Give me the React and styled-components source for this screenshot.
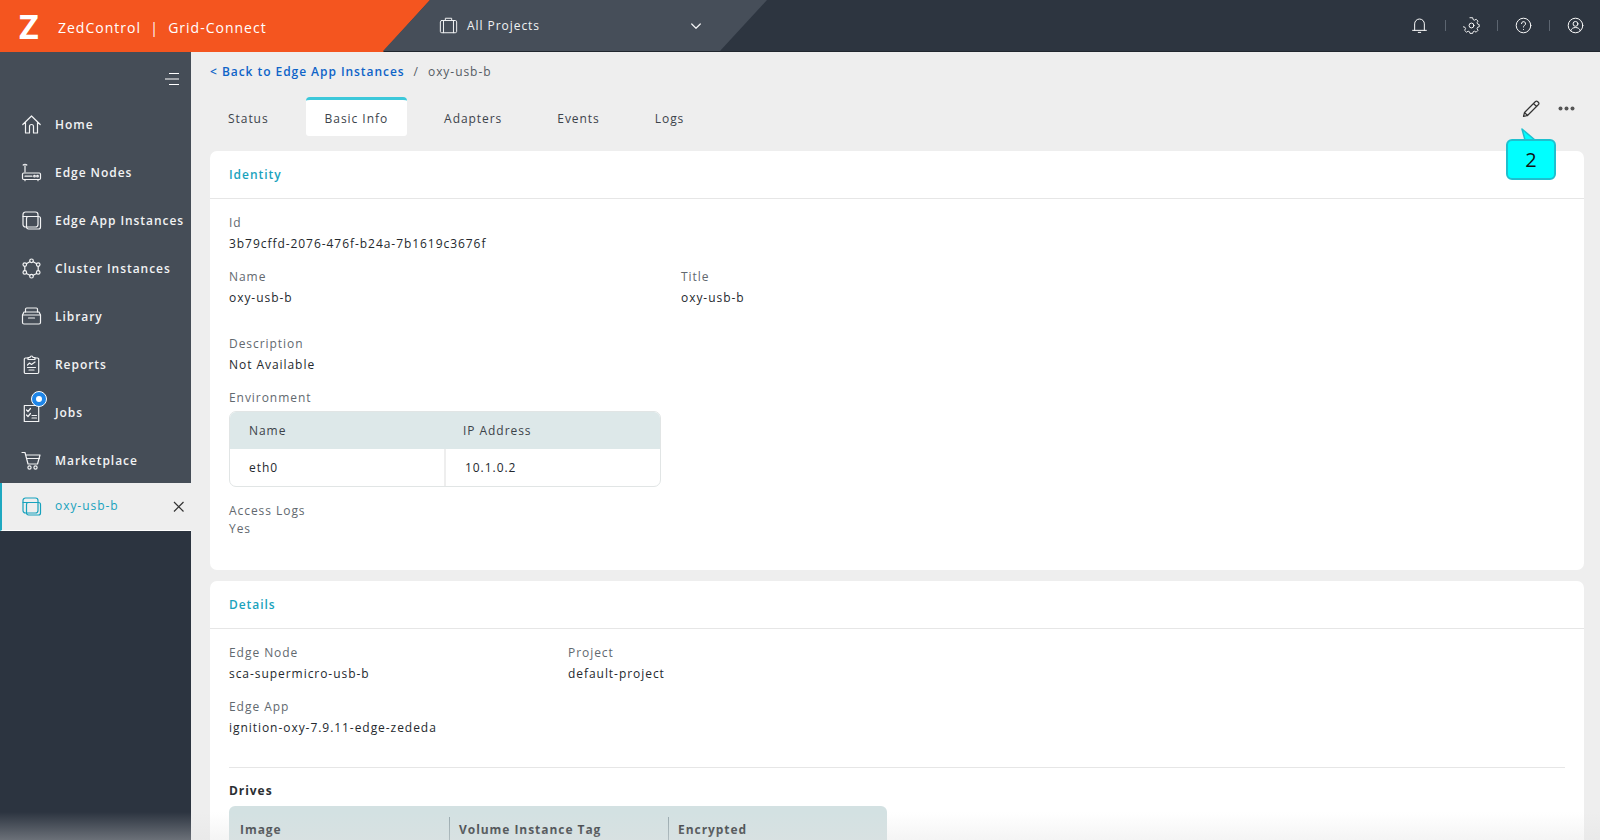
import React from "react";
import styled, { createGlobalStyle } from "styled-components";

const Global = createGlobalStyle`
  html, body { margin: 0; padding: 0; height: 100%; overflow: hidden; }
  body { font-family: "Open Sans", "Liberation Sans", sans-serif; background: #eeeeee; }
  * { box-sizing: border-box; }
`;

const Page = styled.div`
  position: relative;
  width: 1600px;
  height: 840px;
  overflow: hidden;
  display: flex;
  flex-direction: column;
`;
const Header = styled.header`
  height: 52px;
  flex: none;
  display: flex;
  background: #2d3540;
  border-bottom: 1px solid #20262e;
`;
const Brand = styled.div`
  width: 430px;
  height: 52px;
  flex: none;
  display: flex;
  align-items: center;
  padding-left: 19px;
  gap: 17px;
  color: #fff;
  background: #f4551f;
  clip-path: polygon(0 0, 100% 0, 383px 100%, 0 100%);
`;
const Logo = styled.span`
  font: 700 34px/1 "Open Sans", sans-serif;
  width: 22px;
  margin-top: -1px;
`;
const BrandText = styled.span`
  font-size: 14px;
  letter-spacing: 1px;
  margin-top: 2px;
  white-space: nowrap;
`;
const ProjectBar = styled.div`
  width: 384px;
  height: 51px;
  flex: none;
  margin-left: -47px;
  background: #464e59;
  clip-path: polygon(47px 0, 100% 0, 337px 100%, 0 100%);
  display: flex;
  align-items: center;
  padding-left: 56px;
  color: #f1f2f3;
`;
const ProjectName = styled.span`
  font-size: 12px;
  letter-spacing: 0.95px;
  margin-left: 9px;
  width: 223px;
`;
const HeaderIcons = styled.div`
  margin-left: auto;
  display: flex;
  align-items: center;
  padding-right: 16px;
  color: #fff;
`;
const HeaderDivider = styled.span`
  width: 1px;
  height: 11px;
  background: #5c6570;
  margin: 0 17px;
`;
const Body = styled.div`
  flex: 1;
  display: flex;
  min-height: 0;
`;
const Sidebar = styled.aside`
  width: 191px;
  flex: none;
  background: #2c3440;
  display: flex;
  flex-direction: column;
`;
const NavPanel = styled.nav`
  background: #454d57;
  padding-top: 20px;
  height: 431px;
`;
const Collapse = styled.div`
  height: 14px;
  display: flex;
  justify-content: flex-end;
  padding-right: 11px;
  margin-bottom: 14px;
  color: #fff;
`;
const NavItem = styled.div`
  position: relative;
  height: 48px;
  display: flex;
  align-items: center;
  padding-left: 21px;
  gap: 13px;
  color: #f2f3f4;
  font-size: 12px;
  font-weight: 600;
  letter-spacing: 0.95px;
  white-space: nowrap;
`;
const IconSlot = styled.span`
  width: 21px;
  height: 21px;
  flex: none;
  display: flex;
`;
const Badge = styled.span`
  position: absolute;
  left: 31px;
  top: 3px;
  width: 16px;
  height: 16px;
  border-radius: 50%;
  background: #1f86e8;
  border: 1px solid #fff;
  &::after {
    content: "";
    position: absolute;
    left: 4px;
    top: 4px;
    width: 6px;
    height: 6px;
    border-radius: 50%;
    background: #fff;
  }
`;
const ActiveItem = styled.div`
  height: 48px;
  display: flex;
  align-items: center;
  background: #eeeeee;
  border-left: 2px solid #1ea8c0;
  border-bottom: 1px solid #fff;
  padding: 0 6px 0 19px;
  gap: 13px;
  color: #17a2bd;
  font-size: 12px;
  letter-spacing: 0.95px;
  span:nth-of-type(2) { flex: 1; margin-top: -3px; }
`;
const Main = styled.main`
  flex: 1;
  min-width: 0;
  padding: 12px 16px 0 19px;
  display: flex;
  flex-direction: column;
`;
const Crumbs = styled.div`
  font-size: 12px;
  letter-spacing: 0.95px;
  line-height: 16px;
  color: #555c64;
  display: flex;
  gap: 9px;
  a { color: #0e64c8; font-weight: 600; }
`;
const TabRow = styled.div`
  display: flex;
  align-items: flex-end;
  height: 39px;
  margin-top: 17px;
  padding-left: 0;
`;
const Tab = styled.div`
  height: 39px;
  padding: ${(p) => (p.$active ? "0 19px" : "0 18px")};
  margin-right: ${(p) => (p.$active ? "19px" : "19px")};
  display: flex;
  align-items: center;
  font-size: 12px;
  letter-spacing: 0.95px;
  color: #3c434b;
  background: ${(p) => (p.$active ? "#fff" : "transparent")};
  border-top: 3px solid ${(p) => (p.$active ? "#3cc8da" : "transparent")};
  border-radius: 4px 4px 3px 3px;
`;
const TabActions = styled.div`
  margin-left: auto;
  align-self: flex-start;
  display: flex;
  align-items: center;
  gap: 16px;
  margin-top: 1px;
  padding-right: 9px;
  color: #333;
`;
const Card = styled.section`
  background: #fff;
  border-radius: 7px;
  margin-top: ${(p) => p.$gap}px;
  flex: none;
  height: ${(p) => p.$h}px;
`;
const CardTitle = styled.div`
  height: 48px;
  padding: 0 19px;
  display: flex;
  align-items: center;
  font-size: 12px;
  font-weight: 600;
  letter-spacing: 0.95px;
  color: #1aa3bd;
  border-bottom: 1px solid #e6e6e6;
`;
const CardBody = styled.div`
  padding: 15px 19px;
`;
const Row = styled.div`
  display: flex;
  margin-bottom: ${(p) => p.$mb || 0}px;
`;
const Field = styled.div`
  width: ${(p) => p.$w || 452}px;
  flex: none;
`;
const Label = styled.div`
  font-size: 12px;
  letter-spacing: 0.95px;
  line-height: 18px;
  color: #62696f;
`;
const Value = styled.div`
  font-size: 12px;
  letter-spacing: 0.95px;
  line-height: 18px;
  margin-top: ${(p) => p.$mt ?? 3}px;
  color: ${(p) => p.$c || "#24292e"};
`;
const EnvTable = styled.div`
  width: 432px;
  margin-top: 4px;
  border: 1px solid #e1e5e5;
  border-radius: 7px;
  overflow: hidden;
  font-size: 12px;
  letter-spacing: 0.95px;
  display: grid;
  grid-template-columns: 214px 1fr;
`;
const EnvHead = styled.div`
  height: 37px;
  background: #dde8e9;
  display: flex;
  align-items: center;
  padding-left: 19px;
  color: #3c4349;
`;
const EnvCell = styled.div`
  height: 37px;
  display: flex;
  align-items: center;
  padding-left: 19px;
  color: #24292e;
  & + & { border-left: 2px solid #eeeeee; }
`;
const Divider = styled.div`
  height: 1px;
  background: #e6e6e6;
  margin-top: 30px;
`;
const DrivesTitle = styled.div`
  font-size: 12px;
  font-weight: 700;
  letter-spacing: 0.95px;
  line-height: 16px;
  margin-top: 15px;
  color: #2b2f33;
`;
const DriveTable = styled.div`
  width: 658px;
  height: 50px;
  margin-top: 7px;
  background: #d3e1e2;
  border-radius: 6px;
  padding: 11px 0 0 11px;
  display: grid;
  grid-template-columns: 219px 219px 1fr;
  font-size: 12px;
  font-weight: 700;
  letter-spacing: 0.95px;
  color: #2f3438;
`;
const DriveHead = styled.div`
  height: 24px;
  display: flex;
  align-items: center;
  position: relative;
  & + &::before {
    content: "";
    position: absolute;
    left: -10px;
    top: 0;
    width: 1px;
    height: 24px;
    background: #97a8ad;
  }
`;
const Fade = styled.div`
  position: absolute;
  left: 0;
  right: 0;
  bottom: 0;
  height: 28px;
  background: linear-gradient(to bottom, rgba(235, 235, 235, 0), rgba(225, 225, 225, 0.35));
  pointer-events: none;
`;
const Callout = styled.div`
  position: absolute;
  left: 1506px;
  top: 139px;
  width: 50px;
  height: 41px;
  background: #00ffff;
  border: 2px solid #1ec0cf;
  border-radius: 6px;
  display: flex;
  align-items: center;
  justify-content: center;
  font: 400 20px/1 "Open Sans", sans-serif;
  color: #111;
`;
const CalloutTail = styled.svg`
  position: absolute;
  left: 1520px;
  top: 128px;
`;

const Ic = ({ children, size = 21, w, h, sw = 1.2 }) => (
  <svg width={w || size} height={h || size} viewBox="0 0 21 21" fill="none" stroke="currentColor" strokeWidth={sw} strokeLinecap="round" strokeLinejoin="round">
    {children}
  </svg>
);

const icons = {
  home: <Ic><path d="M1.8 10.5 10.5 2l8.7 8.5M4.5 8.5V19h4v-6.5a2 2 0 0 1 4 0V19h4V8.5" /></Ic>,
  node: <Ic><path d="M4 10V3.5M2.2 3A2.5 2.5 0 0 1 5.8 3" /><rect x="1.5" y="11" width="18" height="6.5" rx="1.2" /><path d="M4 14.2h7" /><circle cx="13.5" cy="14.2" r=".8" /><circle cx="16.5" cy="14.2" r=".8" /><path d="M4 17.5v1.2M17 17.5v1.2" /></Ic>,
  app: <Ic><rect x="2" y="2" width="15" height="15" rx="2.5" /><path d="M2 6.5h15" /><rect x="5.5" y="6.5" width="14" height="12.5" rx="2" /></Ic>,
  cluster: <Ic><circle cx="10.5" cy="2.8" r="1.8" /><circle cx="17.2" cy="6.6" r="1.8" /><circle cx="17.2" cy="14.4" r="1.8" /><circle cx="10.5" cy="18.2" r="1.8" /><circle cx="3.8" cy="14.4" r="1.8" /><circle cx="3.8" cy="6.6" r="1.8" /><path d="M12.2 3.7l3.4 2M17.2 8.4v4.2M15.6 15.4l-3.4 1.9M8.8 17.3l-3.4-1.9M3.8 12.6V8.4M5.4 5.7l3.4-2" /></Ic>,
  library: <Ic><path d="M4.5 6V3.2A1.2 1.2 0 0 1 5.7 2h9.6a1.2 1.2 0 0 1 1.2 1.2V6" /><path d="M3 6h15l1.5 3v7.5a1.5 1.5 0 0 1-1.5 1.5H3a1.5 1.5 0 0 1-1.5-1.5V9z" /><path d="M1.5 9h18M7.5 12h6" /></Ic>,
  reports: <Ic><path d="M7 4H4.5A1.2 1.2 0 0 0 3.3 5.2v13.1a1.2 1.2 0 0 0 1.2 1.2h12a1.2 1.2 0 0 0 1.2-1.2V5.2A1.2 1.2 0 0 0 16.500 4H14" /><path d="M7 5.500V3.500h2a1.500 1.500 0 0 1 3 0h2v2z" /><path d="M6.500 11l2-2 2 1.500 3.500-2.500M6.500 13.500h8M8 16h5" /></Ic>,
  jobs: <Ic><path d="M3.300 3.500h14.400v16H3.300z" /><path d="M5.500 8l1.500 1.500 2.500-3M5.500 13l1.500 1.500 2.500-3M11 13.500h4.500M11 16h4.500" /></Ic>,
  cart: <Ic><path d="M1 2.500h3l3 11.500h9.500l2.500-9H5" /><path d="M6 8.500h12.500" /><circle cx="8.500" cy="17.500" r="1.600" /><circle cx="14.500" cy="17.500" r="1.600" /></Ic>,
};

const navItems = [
  ["home", "Home"],
  ["node", "Edge Nodes"],
  ["app", "Edge App Instances"],
  ["cluster", "Cluster Instances"],
  ["library", "Library"],
  ["reports", "Reports"],
  ["jobs", "Jobs"],
  ["cart", "Marketplace"],
];

export default function App() {
  return (
    <Page>
      <Global />
      <Header>
        <Brand>
          <Logo>Z</Logo>
          <BrandText>ZedControl&nbsp; | &nbsp;Grid-Connect</BrandText>
        </Brand>
        <ProjectBar>
          <Ic size={19} sw={1.1}><path d="M7 5V2.500h7V5" /><rect x="1.500" y="5" width="18" height="13.500" rx="1.500" /><path d="M5 5v13.500M16 5v13.500" /></Ic>
          <ProjectName>All Projects</ProjectName>
          <Ic size={12} sw={2.2}><path d="M3 7l7.500 7.500L18 7" /></Ic>
        </ProjectBar>
        <HeaderIcons>
          <Ic size={17}><path d="M4.500 16.500V8.500a6 6 0 0 1 12 0v8M2 16.500h17M9 19h3" /></Ic>
          <HeaderDivider />
          <Ic size={17}><path d="M8.700 1.500h3.600l.6 2.500 1.800.8 2.200-1.300 2.500 2.500-1.300 2.200.8 1.800 2.100.6v3l-2.100.6-.8 1.800 1.300 2.200-2.500 2.500-2.200-1.300-1.800.8-.6 2.100H8.700l-.6-2.100-1.800-.8-2.200 1.300-2.500-2.500 1.300-2.200-.8-1.800-2.100-.6" transform="translate(.5 -.5) scale(.93)" /><circle cx="10.500" cy="10.500" r="3" /></Ic>
          <HeaderDivider />
          <Ic size={17}><circle cx="10.500" cy="10.500" r="9" /><path d="M8 8.200a2.500 2.500 0 1 1 3.700 2.200c-.8.500-1.200 1-1.200 2M10.500 15.500v.1" /></Ic>
          <HeaderDivider />
          <Ic size={17}><circle cx="10.500" cy="10.500" r="9" /><circle cx="10.500" cy="8.500" r="3" /><path d="M4.500 17c1-2.800 3.200-4 6-4s5 1.200 6 4" /></Ic>
        </HeaderIcons>
      </Header>
      <Body>
        <Sidebar>
          <NavPanel>
            <Collapse>
              <svg width="15" height="14" viewBox="0 0 15 14" stroke="currentColor" strokeWidth="1.100"><path d="M4 1.500h10M0 7h14M4 12.500h10" /></svg>
            </Collapse>
            {navItems.map(([k, t]) => (
              <NavItem key={k}>
                <IconSlot>{icons[k]}</IconSlot>
                <span>{t}</span>
                {k === "jobs" && <Badge />}
              </NavItem>
            ))}
          </NavPanel>
          <ActiveItem>
            <IconSlot>{icons.app}</IconSlot>
            <span>oxy-usb-b</span>
            <svg width="13" height="13" viewBox="0 0 13 13" stroke="#333" strokeWidth="1.200"><path d="M2 2l9.500 9.500M11.500 2 2 11.500" /></svg>
          </ActiveItem>
        </Sidebar>
        <Main>
          <Crumbs>
            <a>&lt; Back to Edge App Instances</a>
            <span>/</span>
            <span>oxy-usb-b</span>
          </Crumbs>
          <TabRow>
            <Tab>Status</Tab>
            <Tab $active>Basic Info</Tab>
            <Tab>Adapters</Tab>
            <Tab>Events</Tab>
            <Tab>Logs</Tab>
            <TabActions>
              <Ic size={21}><path d="M3.500 14.500 14.500 3.500a1.500 1.500 0 0 1 2 0l1 1a1.500 1.500 0 0 1 0 2L6.500 17.500l-4 1zM12.500 5.500l3 3M3.500 14.500l3 3" /></Ic>
              <svg width="17" height="5" viewBox="0 0 17 5" fill="#555"><circle cx="2.500" cy="2.500" r="2" /><circle cx="8.500" cy="2.500" r="2" /><circle cx="14.500" cy="2.500" r="2" /></svg>
            </TabActions>
          </TabRow>
          <Card $gap={15} $h={419}>
            <CardTitle>Identity</CardTitle>
            <CardBody>
              <Row $mb={15}>
                <Field>
                  <Label>Id</Label>
                  <Value>3b79cffd-2076-476f-b24a-7b1619c3676f</Value>
                </Field>
              </Row>
              <Row $mb={28}>
                <Field>
                  <Label>Name</Label>
                  <Value>oxy-usb-b</Value>
                </Field>
                <Field>
                  <Label>Title</Label>
                  <Value>oxy-usb-b</Value>
                </Field>
              </Row>
              <Row $mb={15}>
                <Field>
                  <Label>Description</Label>
                  <Value>Not Available</Value>
                </Field>
              </Row>
              <Label>Environment</Label>
              <EnvTable>
                <EnvHead>Name</EnvHead>
                <EnvHead>IP Address</EnvHead>
                <EnvCell>eth0</EnvCell>
                <EnvCell>10.1.0.2</EnvCell>
              </EnvTable>
              <Row>
                <Field>
                  <Label style={{ marginTop: 15 }}>Access Logs</Label>
                  <Value $mt={0} $c="#62696f">Yes</Value>
                </Field>
              </Row>
            </CardBody>
          </Card>
          <Card $gap={11} $h={300}>
            <CardTitle>Details</CardTitle>
            <CardBody>
              <Row $mb={15}>
                <Field $w={339}>
                  <Label>Edge Node</Label>
                  <Value>sca-supermicro-usb-b</Value>
                </Field>
                <Field>
                  <Label>Project</Label>
                  <Value>default-project</Value>
                </Field>
              </Row>
              <Field>
                <Label>Edge App</Label>
                <Value>ignition-oxy-7.9.11-edge-zededa</Value>
              </Field>
              <Divider />
              <DrivesTitle>Drives</DrivesTitle>
              <DriveTable>
                <DriveHead>Image</DriveHead>
                <DriveHead>Volume Instance Tag</DriveHead>
                <DriveHead>Encrypted</DriveHead>
              </DriveTable>
            </CardBody>
          </Card>
        </Main>
      </Body>
      <CalloutTail width="22" height="14" viewBox="0 0 22 14">
        <path d="M2 1 L15 12 L5 12 Z" fill="#00ffff" stroke="#1ec0cf" strokeWidth="1.500" strokeLinejoin="round" />
      </CalloutTail>
      <Callout>2</Callout>
      <Fade />
    </Page>
  );
}
